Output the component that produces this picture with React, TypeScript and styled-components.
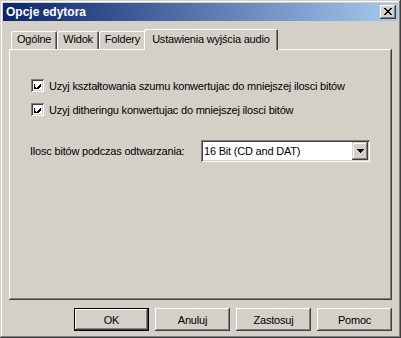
import React from 'react';
import styled, { createGlobalStyle } from 'styled-components';

const face = '#d4d0c8';
const shadow = '#808080';
const darkShadow = '#404040';

const GlobalStyle = createGlobalStyle`
  html, body {
    margin: 0;
    padding: 0;
    background: ${face};
  }
  * {
    box-sizing: border-box;
  }
`;

const Window = styled.div`
  width: 401px;
  height: 338px;
  padding: 3px;
  background: ${face};
  box-shadow: inset -1px -1px 0 ${darkShadow}, inset 1px 1px 0 ${face}, inset -2px -2px 0 ${shadow},
    inset 2px 2px 0 #ffffff;
  font-family: 'Liberation Sans', Arial, sans-serif;
  font-size: 11px;
  letter-spacing: -0.2px;
  color: #000;
  display: flex;
  flex-direction: column;
`;

const TitleBar = styled.div`
  height: 18px;
  display: flex;
  align-items: center;
  justify-content: space-between;
  padding: 0 2px 0 3px;
  background: linear-gradient(to right, #0a246a, #a6caf0);
`;

const Title = styled.span`
  color: #fff;
  font-weight: bold;
  font-size: 12px;
  letter-spacing: 0;
`;

const CloseButton = styled.div`
  width: 16px;
  height: 14px;
  background: ${face};
  box-shadow: inset -1px -1px 0 ${darkShadow}, inset 1px 1px 0 #ffffff, inset -2px -2px 0 ${shadow};
  display: flex;
  align-items: center;
  justify-content: center;
  padding-bottom: 1px;
`;

const Body = styled.div`
  flex: 1;
  display: flex;
  flex-direction: column;
  padding: 8px 6px 0 6px;
`;

const TabStrip = styled.div`
  display: flex;
  align-items: flex-end;
  height: 20px;
  padding-left: 2px;
  position: relative;
  z-index: 1;
`;

const Tab = styled.div<{ $active?: boolean }>`
  height: ${({ $active }) => ($active ? '21px' : '18px')};
  margin: ${({ $active }) => ($active ? '0 -2px -1px -2px' : '0')};
  padding: ${({ $active }) => ($active ? '4px 8px 0 8px' : '2px 6px 0 6px')};
  background: ${face};
  border-radius: 2px 2px 0 0;
  box-shadow: inset 1px 1px 0 #ffffff, inset -1px 0 0 ${darkShadow}, inset -2px 0 0 ${shadow};
  white-space: nowrap;
  line-height: 13px;
  position: relative;
  z-index: ${({ $active }) => ($active ? 2 : 1)};
`;

const Panel = styled.div`
  height: 251px;
  background: ${face};
  box-shadow: inset -1px -1px 0 ${darkShadow}, inset 1px 1px 0 #ffffff, inset -2px -2px 0 ${shadow};
  padding: 30px 22px 0 22px;
  display: flex;
  flex-direction: column;
`;

const CheckRow = styled.label`
  display: flex;
  align-items: center;
  gap: 5px;
  height: 13px;
  margin-bottom: 11px;
`;

const CheckBox = styled.span`
  width: 13px;
  height: 13px;
  flex: none;
  background: #fff;
  box-shadow: inset 1px 1px 0 ${shadow}, inset -1px -1px 0 #ffffff, inset 2px 2px 0 ${darkShadow},
    inset -2px -2px 0 ${face};
  display: flex;
  align-items: center;
  justify-content: center;
`;

const FieldRow = styled.div`
  display: flex;
  align-items: center;
  margin-top: 13px;
  height: 21px;
`;

const FieldLabel = styled.span`
  width: 172px;
  margin-left: -1px;
`;

const Combo = styled.div`
  width: 170px;
  height: 22px;
  background: #fff;
  box-shadow: inset 1px 1px 0 ${shadow}, inset -1px -1px 0 #ffffff, inset 2px 2px 0 ${darkShadow},
    inset -2px -2px 0 ${face};
  display: flex;
  align-items: center;
  padding: 2px;
`;

const ComboText = styled.span`
  flex: 1;
  padding-left: 1px;
`;

const ComboButton = styled.div`
  width: 16px;
  height: 18px;
  background: ${face};
  box-shadow: inset -1px -1px 0 ${darkShadow}, inset 1px 1px 0 ${face}, inset -2px -2px 0 ${shadow},
    inset 2px 2px 0 #ffffff;
  display: flex;
  align-items: center;
  justify-content: center;
`;

const ButtonRow = styled.div`
  display: flex;
  justify-content: flex-end;
  gap: 6px;
  margin-top: 8px;
`;

const Button = styled.div<{ $default?: boolean }>`
  width: 75px;
  height: 23px;
  display: flex;
  align-items: center;
  justify-content: center;
  background: ${face};
  box-shadow: ${({ $default }) =>
    $default
      ? `inset 0 0 0 1px #000, inset -2px -2px 0 ${darkShadow}, inset 2px 2px 0 #ffffff, inset -3px -3px 0 ${shadow}`
      : `inset -1px -1px 0 ${darkShadow}, inset 1px 1px 0 #ffffff, inset -2px -2px 0 ${shadow}`};
`;

const CheckMark = () => (
  <svg width="7" height="7" viewBox="0 0 7 7" shapeRendering="crispEdges">
    <path d="M0 2h1v3h1v1h1v-1h1v-1h1v-1h1v-1h1v3h-1v1h-1v1h-1v1h-1v1h-1v-1h-1v-1h-1z" fill="#000" />
  </svg>
);

const CloseGlyph = () => (
  <svg width="8" height="7" viewBox="0 0 8 7" shapeRendering="crispEdges">
    <path
      d="M0 0h2v1h1v1h2v-1h1v-1h2v1h-1v1h-1v1h-1v1h1v1h1v1h1v1h-2v-1h-1v-1h-2v1h-1v1h-2v-1h1v-1h1v-1h1v-1h-1v-1h-1v-1h-1z"
      fill="#000"
    />
  </svg>
);

const ArrowDown = () => (
  <svg width="7" height="4" viewBox="0 0 7 4" shapeRendering="crispEdges">
    <path d="M0 0h7v1h-1v1h-1v1h-1v1h-1v-1h-1v-1h-1v-1h-1z" fill="#000" />
  </svg>
);

const tabs = ['Ogólne', 'Widok', 'Foldery', 'Ustawienia wyjścia audio'];

export default function App() {
  return (
    <>
      <GlobalStyle />
      <Window>
        <TitleBar>
          <Title>Opcje edytora</Title>
          <CloseButton>
            <CloseGlyph />
          </CloseButton>
        </TitleBar>
        <Body>
          <TabStrip>
            {tabs.map((t, i) => (
              <Tab key={t} $active={i === tabs.length - 1}>
                {t}
              </Tab>
            ))}
          </TabStrip>
          <Panel>
            <CheckRow>
              <CheckBox>
                <CheckMark />
              </CheckBox>
              Uzyj kształtowania szumu konwertujac do mniejszej ilosci bitów
            </CheckRow>
            <CheckRow>
              <CheckBox>
                <CheckMark />
              </CheckBox>
              Uzyj ditheringu konwertujac do mniejszej ilosci bitów
            </CheckRow>
            <FieldRow>
              <FieldLabel>Ilosc bitów podczas odtwarzania:</FieldLabel>
              <Combo>
                <ComboText>16 Bit (CD and DAT)</ComboText>
                <ComboButton>
                  <ArrowDown />
                </ComboButton>
              </Combo>
            </FieldRow>
          </Panel>
          <ButtonRow>
            <Button $default>OK</Button>
            <Button>Anuluj</Button>
            <Button>Zastosuj</Button>
            <Button>Pomoc</Button>
          </ButtonRow>
        </Body>
      </Window>
    </>
  );
}
